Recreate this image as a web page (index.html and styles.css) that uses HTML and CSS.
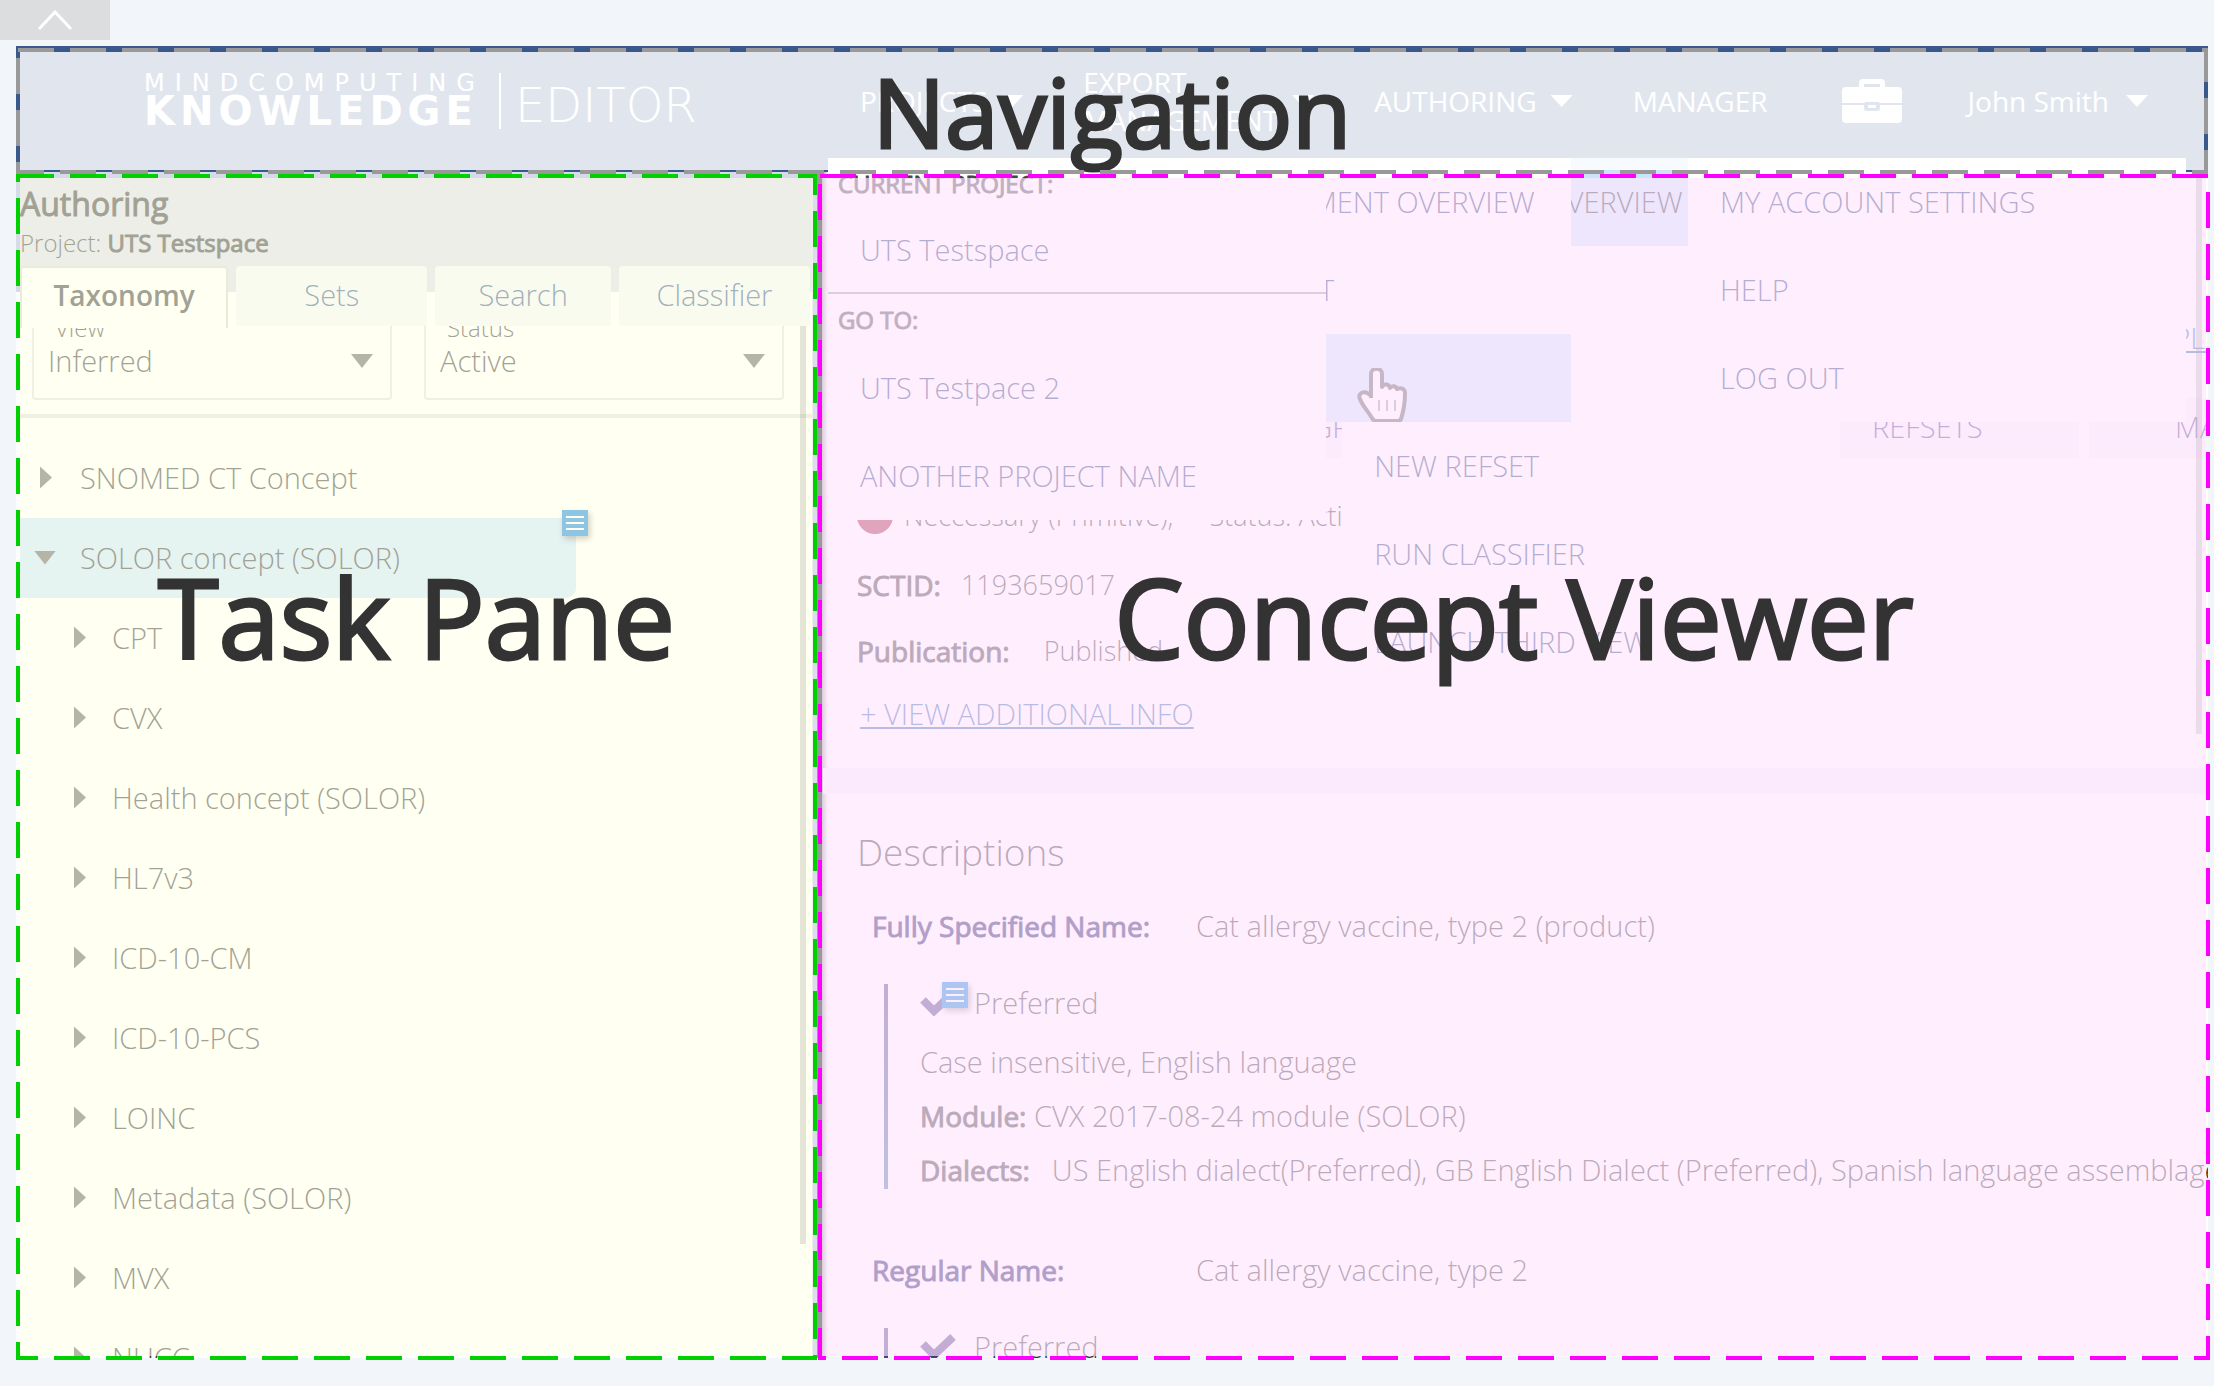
FILE: index.html
```html
<!DOCTYPE html>
<html lang="en">
<head>
<meta charset="utf-8">
<title>MindComputing Knowledge Editor</title>
<link rel="stylesheet" href="styles.css">
</head>
<body>
<button class="collapse" type="button" aria-label="Collapse">
  <svg width="36" height="22" viewBox="0 0 36 22"><path d="M2 20 18 3 34 20" fill="none" stroke="#fff" stroke-width="3"/></svg>
</button>

<div class="app">
  <header class="navbar">
    <div class="brand">
      <div class="wordmark">
        <span class="wordmark-top">MINDCOMPUTING</span>
        <span class="wordmark-main">KNOWLEDGE</span>
      </div>
      <span class="product">EDITOR</span>
    </div>
    <nav>
      <ul class="nav-list">
        <li>
          <button class="nav-link" type="button">PROJECTS <span class="caret"></span></button>
          <div class="menu menu-projects">
            <h3 class="menu-title">CURRENT PROJECT:</h3>
            <a class="menu-item ruled" href="#">UTS Testspace</a>
            <h3 class="menu-title">GO TO:</h3>
            <a class="menu-item" href="#">UTS Testpace 2</a>
            <a class="menu-item" href="#">ANOTHER PROJECT NAME</a>
          </div>
        </li>
        <li>
          <button class="nav-link" type="button"><span>EXPORT<br>MANAGEMENT</span> <span class="caret"></span></button>
          <div class="menu menu-export">
            <a class="menu-item" href="#">EXPORT MANAGEMENT OVERVIEW</a>
            <a class="menu-item" href="#">PUBLISH CONTENT</a>
            <a class="menu-item active" href="#">NEW EXPORT</a>
            <svg class="pointer" width="50" height="54" viewBox="0 0 50 54">
              <path d="M14 30V6c0-7 11-7 11 0v13c2-4 7-3 8 1 2-3 6-2 7 1 4-2 8 0 8 4 0 12-2 20-4 26-1 2-2 2-3 2H19c-2 0-3-1-4-3C10 42 5 37 3 31c-3-6 5-10 11-3" fill="#fff" stroke="#555" stroke-width="4" stroke-linejoin="round"/>
              <path d="M22 32v11M30 32v11M38 32v11" stroke="#999" stroke-width="2"/>
            </svg>
          </div>
        </li>
        <li>
          <button class="nav-link" type="button">AUTHORING <span class="caret"></span></button>
          <div class="menu menu-authoring">
            <a class="menu-item active" href="#">AUTHORING OVERVIEW</a>
            <a class="menu-item" href="#">EDIT</a>
            <a class="menu-item" href="#">CONCEPTS</a>
            <a class="menu-item" href="#">NEW REFSET</a>
            <a class="menu-item" href="#">RUN CLASSIFIER</a>
            <a class="menu-item" href="#">LAUNCH THIRD VIEW</a>
          </div>
        </li>
        <li><a class="nav-link" href="#">MANAGER</a></li>
        <li class="nav-case">
          <button class="nav-link" type="button" aria-label="Toolbox">
            <svg width="60" height="44" viewBox="0 0 60 44">
              <path d="M17 9V4q0-4 4-4h18q4 0 4 4v5h-5V5H22v4z" fill="#fff"/>
              <path d="M4 8h52q4 0 4 4v12H37v-1H23v1H0V12q0-4 4-4zM0 26h22v3q0 3 3 3h10q3 0 3-3v-3h22v14q0 4-4 4H4q-4 0-4-4z" fill="#fff"/>
              <path d="M26 26h8v3h-8z" fill="#fff"/>
            </svg>
          </button>
        </li>
        <li>
          <button class="nav-link nav-user" type="button">John Smith <span class="caret"></span></button>
          <div class="menu menu-user">
            <a class="menu-item" href="#">MY ACCOUNT SETTINGS</a>
            <a class="menu-item" href="#">HELP</a>
            <a class="menu-item" href="#">LOG OUT</a>
          </div>
        </li>
      </ul>
    </nav>
    <div class="zone zone-nav">
      <svg class="dashes"><rect class="dash"/></svg>
      <span>Navigation</span>
    </div>
  </header>

  <main class="workspace">
    <section class="task-pane">
      <header class="task-head">
        <h1>Authoring</h1>
        <p>Project: <strong>UTS Testspace</strong></p>
      </header>
      <div class="tabs">
        <button class="tab current" type="button">Taxonomy</button>
        <button class="tab tab-sets" type="button">Sets</button>
        <button class="tab tab-search" type="button">Search</button>
        <button class="tab tab-classifier" type="button">Classifier</button>
      </div>
      <div class="task-body">
        <form class="filters">
          <div class="field">
            <label for="view">View</label>
            <select id="view"><option>Inferred</option></select>
            <span class="caret"></span>
          </div>
          <div class="field">
            <label for="status">Status</label>
            <select id="status"><option>Active</option></select>
            <span class="caret"></span>
          </div>
        </form>
        <ul class="tree">
          <li class="node"><span class="arrow"></span>SNOMED CT Concept</li>
          <li class="node selected"><span class="caret"></span>SOLOR concept (SOLOR)
            <button class="note" type="button" aria-label="Options"><span></span><span></span><span></span></button>
          </li>
          <li class="node child"><span class="arrow"></span>CPT</li>
          <li class="node child"><span class="arrow"></span>CVX</li>
          <li class="node child"><span class="arrow"></span>Health concept (SOLOR)</li>
          <li class="node child"><span class="arrow"></span>HL7v3</li>
          <li class="node child"><span class="arrow"></span>ICD-10-CM</li>
          <li class="node child"><span class="arrow"></span>ICD-10-PCS</li>
          <li class="node child"><span class="arrow"></span>LOINC</li>
          <li class="node child"><span class="arrow"></span>Metadata (SOLOR)</li>
          <li class="node child"><span class="arrow"></span>MVX</li>
          <li class="node child"><span class="arrow"></span>NUCC</li>
        </ul>
        <div class="thumb thumb-task"></div>
      </div>
      <div class="zone zone-task">
        <svg class="dashes"><rect class="dash"/></svg>
        <span>Task Pane</span>
      </div>
    </section>

    <section class="concept-pane">
      <div class="concept-body">
        <div class="concept-top"><a href="#">DUPLICATE</a></div>
        <div class="concept-tabs">
          <button type="button">DIAGRAM</button>
          <button type="button">SETS</button>
          <button type="button">REFSETS</button>
          <button type="button">MAPS</button>
        </div>
        <div class="facts">
          <p class="state"><span class="dot"></span><span>Neccessary (Primitive),</span><span>Status: Active</span></p>
          <p class="fact"><b>SCTID:</b><span>1193659017</span></p>
          <p class="fact wide"><b>Publication:</b><span>Published</span></p>
          <a class="more" href="#">+ VIEW ADDITIONAL INFO</a>
        </div>
        <div class="descriptions">
          <h2>Descriptions</h2>
          <article class="description">
            <div class="name"><h3>Fully Specified Name:</h3><span>Cat allergy vaccine, type 2 (product)</span></div>
            <div class="details">
              <p class="preferred">
                <svg class="tick" width="38" height="26" viewBox="0 0 38 26"><path d="M3 10 14 21 33 3" fill="none" stroke="#4a3a80" stroke-width="8"/></svg>
                <button class="note" type="button" aria-label="Options"><span></span><span></span><span></span></button>
                Preferred
              </p>
              <p>Case insensitive, English language</p>
              <p><b>Module:</b> CVX 2017-08-24 module (SOLOR)</p>
              <p class="dialects"><b>Dialects:</b><span>US English dialect(Preferred), GB English Dialect (Preferred), Spanish language assemblage</span></p>
            </div>
          </article>
          <article class="description">
            <div class="name"><h3>Regular Name:</h3><span>Cat allergy vaccine, type 2</span></div>
            <div class="details">
              <p class="preferred">
                <svg class="tick" width="38" height="26" viewBox="0 0 38 26"><path d="M3 10 14 21 33 3" fill="none" stroke="#4a3a80" stroke-width="8"/></svg>
                Preferred
              </p>
            </div>
          </article>
        </div>
      </div>
      <div class="thumb thumb-concept"></div>
      <div class="zone zone-concept">
        <svg class="dashes"><rect class="dash"/></svg>
        <span>Concept Viewer</span>
      </div>
    </section>
  </main>
</div>
</body>
</html>
```
FILE: styles.css
```css
* { box-sizing: border-box; }

body {
  margin: 0;
  height: 100vh;
  display: flex;
  flex-direction: column;
  background: #f2f5fa;
  color: #333;
  font: 300 29px/38px "Open Sans", "Noto Sans", sans-serif;
  overflow: hidden;
}

h1, h2, h3, p, ul { margin: 0; padding: 0; font-size: inherit; font-weight: inherit; }
ul { list-style: none; }
b, strong, h1, h3 { font-weight: 400; font-size: 28px; -webkit-text-stroke: 1px; }
button { margin: 0; padding: 0; border: 0; background: none; font: inherit; color: inherit; }
a { color: #2a68ac; }

.collapse {
  width: 110px;
  height: 40px;
  background: #dcddde;
  display: flex;
  align-items: center;
  justify-content: center;
}

.app {
  flex: 1;
  min-height: 0;
  margin: 6px 6px 28px 16px;
  display: flex;
  flex-direction: column;
}

.caret {
  flex: none;
  width: 22px;
  height: 14px;
  background: #5d5d5d;
  clip-path: polygon(0 0, 100% 0, 50% 100%);
}

/* Navigation bar */
.navbar {
  position: relative;
  height: 126px;
  background: #3a588a;
  color: #fff;
  display: flex;
  justify-content: space-between;
  padding: 0 60px 0 128px;
}
.brand { display: flex; align-items: center; padding-bottom: 16px; }
.wordmark {
  display: flex;
  flex-direction: column;
  font-family: "DejaVu Sans", sans-serif;
  padding-right: 14px;
  border-right: 2px solid #fff;
}
.wordmark-top { font-size: 24px; line-height: 20px; font-weight: 400; letter-spacing: 10px; }
.wordmark-main { font-size: 40px; line-height: 36px; font-weight: 700; letter-spacing: 5px; }
.product { padding: 8px 0 0 14px; font-family: "DejaVu Sans", sans-serif; font-weight: 200; font-size: 48px; line-height: 54px; }
.nav-list { display: flex; height: 100%; gap: 60px; font-size: 28px; font-weight: 400; }
.nav-list li { position: relative; display: flex; }
.nav-link {
  display: flex;
  align-items: center;
  gap: 14px;
  padding-bottom: 16px;
  color: #fff;
  text-align: left;
  text-decoration: none;
  white-space: nowrap;
}
.nav-link .caret { background: #fff; height: 12px; }
.nav-user { gap: 17px; }
.nav-case { padding: 0 6px 0 14px; }

/* Drop-down menus */
.menu {
  position: absolute;
  top: 112px;
  left: -32px;
  z-index: 2;
  width: 498px;
  background: #fff;
  color: #1a3c74;
  font-size: 29px;
  font-weight: 300;
}
.menu-projects { z-index: 4; }
.menu-export { z-index: 3; left: -10px; }
.menu-user { left: auto; right: -38px; }
.menu-title {
  height: 48px;
  padding-left: 10px;
  font-size: 24px;
  line-height: 52px;
  font-weight: 400;
  color: #444;
}
.menu-item {
  display: block;
  height: 88px;
  padding-left: 32px;
  line-height: 87px;
  color: inherit;
  text-decoration: none;
}
.menu-export .menu-item { padding-left: 10px; }
.menu-item.ruled { border-bottom: 2px solid #999; }
.menu-item.ruled + .menu-title { height: 50px; }
.menu-item.active { background: #c8e5fb; color: #333; }
.pointer { position: absolute; left: 284px; bottom: 0; }

/* Labelled zones laid over the application */
.zone {
  position: absolute;
  z-index: 6;
  top: 2px;
  right: 0;
  bottom: -2px;
  left: 0;
  border: 4px solid transparent;
  background-clip: padding-box;
  color: #333;
  text-align: center;
  white-space: nowrap;
  font-weight: 400;
  font-size: 110px;
}
.zone span { -webkit-text-stroke: 3px; }
.dashes { position: absolute; top: -4px; left: -4px; width: calc(100% + 8px); height: calc(100% + 8px); }
.dash {
  x: 2px;
  y: 2px;
  width: calc(100% - 4px);
  height: calc(100% - 4px);
  fill: none;
  stroke-width: 4px;
  stroke-dasharray: 36 16;
}
.zone-nav { background-color: rgba(255, 255, 255, .85); font-size: 96px; line-height: 118px; }
.zone-nav .dash { stroke: #999; }
.zone-task, .zone-concept { padding-top: 358px; line-height: 160px; }
.zone-task { background-color: rgba(255, 255, 231, .54); }
.zone-task .dash { stroke: #00d000; }
.zone-concept { left: -5px; right: -2px; background-color: rgba(255, 229, 254, .67); }
.zone-concept .dash { stroke: #f0f; }

.workspace {
  flex: 1;
  min-height: 0;
  display: grid;
  grid-template-columns: minmax(0, 801fr) minmax(0, 1391fr);
}
.thumb { position: absolute; width: 6px; background: rgba(60, 60, 60, .3); }

/* Task pane */
.task-pane {
  position: relative;
  min-height: 0;
  display: flex;
  flex-direction: column;
  background: #fff;
}
.task-pane::after {
  content: "";
  position: absolute;
  inset: 0 0 0 auto;
  width: 5px;
  background: #d8dfea;
}
.task-head { height: 120px; padding: 12px 4px 0; background: #d5dbe8; }
.task-head h1 { font-size: 32px; line-height: 40px; }
.task-head p, .task-head strong { font-size: 24px; line-height: 38px; }
.tabs { position: relative; z-index: 1; display: flex; gap: 8px; height: 60px; margin-top: -26px; padding: 0 7px 0 4px; }
.tab { padding-bottom: 2px; background: #f3f6f9; color: #30538a; border-radius: 4px 4px 0 0; }
.tab.current {
  flex: 205;
  height: 62px;
  padding-bottom: 6px;
  background: #fff;
  color: #333;
  font-size: 28px;
  font-weight: 600;
  border: 2px solid #d3d3d0;
  border-bottom: 0;
}
.tab-sets { flex: 192; }
.tab-search { flex: 176; }
.tab-classifier { flex: 192; }
.task-body { position: relative; flex: 1; min-height: 0; overflow: hidden; }
.filters {
  display: flex;
  gap: 32px;
  height: 92px;
  padding: 0 33px 14px 16px;
  border-bottom: 4px solid #dfdfdc;
}
.field {
  position: relative;
  flex: 1;
  margin-top: -30px;
  border: 2px solid #dfdfdc;
  border-radius: 4px;
  display: flex;
  align-items: center;
  padding: 26px 17px 0 14px;
}
.field label { position: absolute; left: 21px; top: 12px; font-size: 24px; line-height: 36px; }
.field select {
  flex: 1;
  padding: 0;
  border: 0;
  background: none;
  appearance: none;
  font: inherit;
  color: inherit;
}
.tree { padding: 20px 0 0 4px; }
.node { position: relative; display: flex; align-items: center; height: 80px; padding: 0 0 1px 20px; }
.node .arrow { width: 12px; height: 22px; margin-right: 28px; background: #5d5d5d; clip-path: polygon(0 0, 100% 50%, 0 100%); }
.node .caret { margin: 0 24px 0 -6px; }
.node.child { padding-left: 54px; }
.node.child .arrow { margin-right: 26px; }
.node.selected { width: 556px; background: #c6e4fd; border-radius: 0 0 10px 0; }
.note {
  width: 26px;
  height: 26px;
  padding: 6px 4px;
  display: flex;
  flex-direction: column;
  justify-content: space-between;
  background: #0982de;
  box-shadow: 2px 3px 6px rgba(0, 0, 0, .4);
}
.note span { height: 2px; background: #fff; }
.node .note { position: absolute; top: -8px; right: -12px; }
.thumb-task { top: 0; right: 11px; height: 918px; }

/* Concept viewer */
.concept-pane {
  position: relative;
  min-height: 0;
  background: #fff;
  border-left: 6px solid #999;
}
.concept-body { height: 100%; overflow: hidden; white-space: nowrap; box-shadow: inset 4px 0 4px -2px #999; }
.concept-top { height: 226px; padding-top: 147px; }
.concept-top a { margin-left: calc(100% - 76px); }
.concept-tabs { display: flex; justify-content: flex-end; gap: 10px; margin-right: -174px; }
.concept-tabs button { width: 293px; height: 60px; padding: 0 0 2px 86px; text-align: left; background: #f6f5fc; color: #4a3f8c; }
.facts { padding: 28px 0 25px 34px; border-bottom: 26px solid #f2f1fb; font-size: 27px; }
.state { display: flex; align-items: center; gap: 36px; height: 67px; padding-bottom: 8px; }
.dot { width: 36px; height: 36px; margin-right: -25px; border-radius: 50%; background: #a02038; }
.fact { display: flex; align-items: center; gap: 20px; height: 66px; padding-bottom: 2px; }
.fact.wide { gap: 34px; }
.more { display: inline-block; padding-left: 3px; font-size: 29px; line-height: 58px; }
.descriptions { padding: 28px 0 0 34px; }
.descriptions h2 { font-size: 37px; line-height: 60px; margin-bottom: 14px; }
.description { margin-bottom: 51px; }
.name { display: grid; grid-template-columns: 324px 1fr; align-items: center; height: 60px; padding: 0 0 1px 15px; margin-bottom: 28px; }
.name h3 { color: #101060; }
.details {
  min-height: 205px;
  margin-left: 27px;
  padding-left: 32px;
  border-left: 4px solid;
  border-image: linear-gradient(#4a3a80, #3a78ac) 1;
  display: flex;
  flex-direction: column;
  gap: 16px;
}
.preferred { position: relative; display: flex; align-items: center; gap: 16px; margin-bottom: 5px; }
.preferred .note { position: absolute; left: 22px; top: -2px; }
.dialects { display: flex; gap: 22px; }
.thumb-concept { top: 4px; right: 6px; height: 558px; z-index: 5; }
```
